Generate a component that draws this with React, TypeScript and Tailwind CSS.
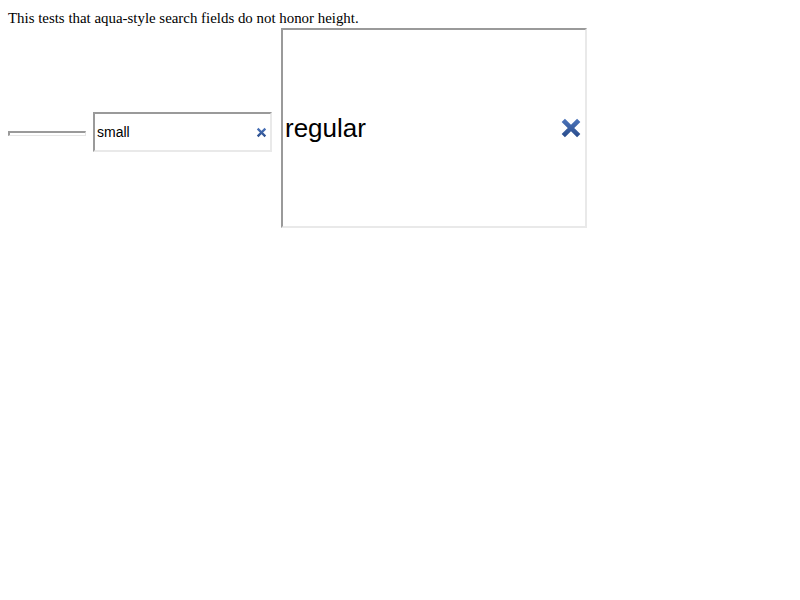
import React from "react";

function ClearIcon({ size, stroke }: { size: number; stroke: number }) {
  return (
    <svg width={size} height={size} viewBox="0 0 20 20" className="block">
      <defs>
        <linearGradient id={`xg${size}`} x1="0" y1="0" x2="0" y2="1">
          <stop offset="0" stopColor="#4a72b8" />
          <stop offset="1" stopColor="#2c4f8f" />
        </linearGradient>
      </defs>
      <path
        d="M3 3 L17 17 M17 3 L3 17"
        stroke={`url(#xg${size})`}
        strokeWidth={stroke}
        strokeLinecap="butt"
      />
    </svg>
  );
}

export default function App() {
  return (
    <div className="min-h-[600px] bg-white p-2 font-['Liberation_Serif',serif] text-black">
      <div className="pt-[1px] text-[14.9px] leading-[18px]">
        This tests that aqua-style search fields do not honor height.
      </div>

      <div className="mt-[1px] flex items-start">
        {/* tiny field */}
        <div className="mt-[103px] h-[5px] w-[78px] border-t-2 border-l-2 border-b border-r border-t-[#9a9a9a] border-l-[#9a9a9a] border-b-[#e6e6e6] border-r-[#e6e6e6] bg-white" />

        {/* small field */}
        <div className="ml-[7px] mt-[84px] flex h-[40px] w-[179px] items-center border-t-2 border-l-2 border-b-2 border-r-2 border-t-[#9a9a9a] border-l-[#9a9a9a] border-b-[#e9e9e9] border-r-[#e9e9e9] bg-white pl-[2px] pr-[3px] font-['Liberation_Sans',Arial,sans-serif]">
          <span className="flex-1 text-[14px] leading-none">small</span>
          <ClearIcon size={11} stroke={4} />
        </div>

        {/* regular field */}
        <div className="ml-[9px] flex h-[200px] w-[306px] items-center border-t-2 border-l-2 border-b-2 border-r-2 border-t-[#9a9a9a] border-l-[#9a9a9a] border-b-[#e9e9e9] border-r-[#e9e9e9] bg-white pl-[2px] pr-[3px] font-['Liberation_Sans',Arial,sans-serif]">
          <span className="flex-1 text-[26px] leading-none">regular</span>
          <ClearIcon size={22} stroke={4.2} />
        </div>
      </div>
    </div>
  );
}
